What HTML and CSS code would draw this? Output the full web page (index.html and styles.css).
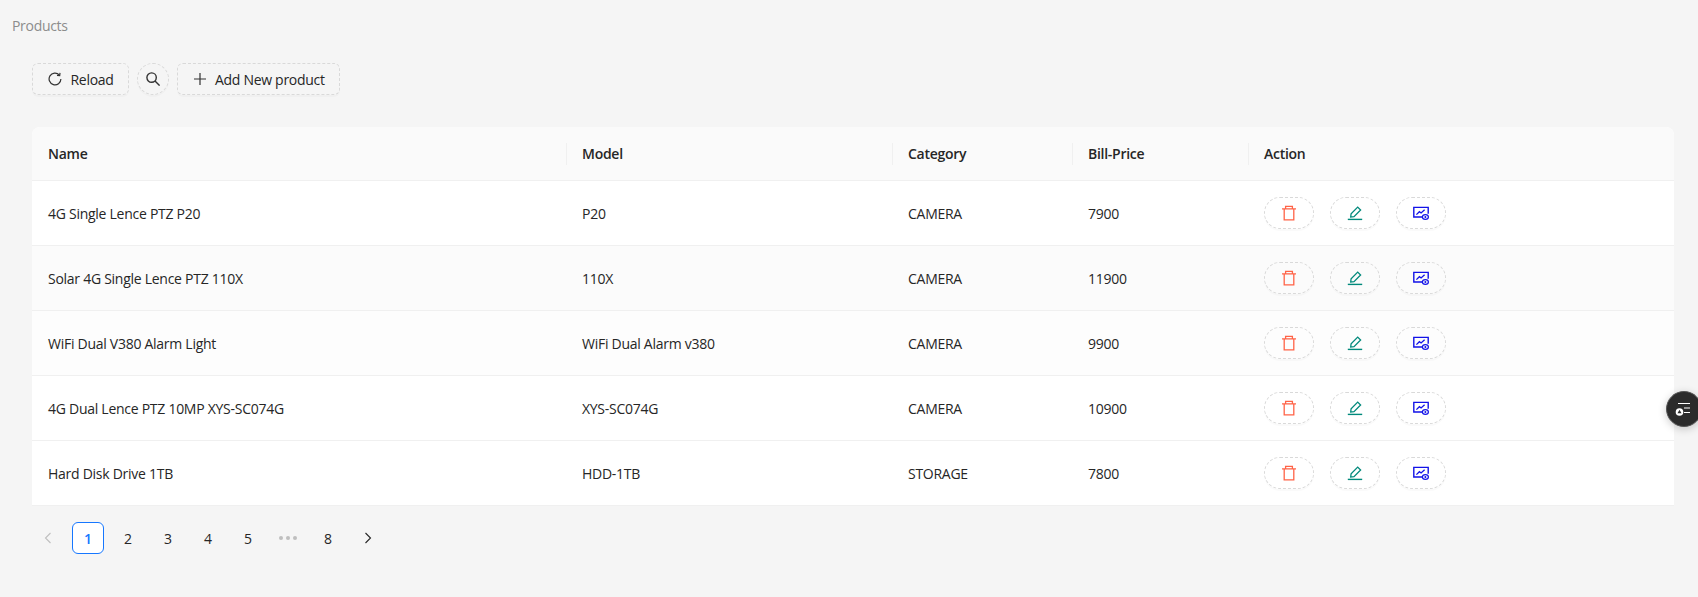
FILE: index.html
```html
<!DOCTYPE html>
<html lang="en">
<head>
<meta charset="utf-8">
<title>Products</title>
<link rel="stylesheet" href="styles.css">
</head>
<body>
<svg class="defs" aria-hidden="true">
  <symbol id="i-trash" viewBox="0 0 16 16"><path d="M1 3.8h14M4.6 3.6V1.3h6.8v2.3M3.2 3.8v11.1h9.6V3.8" fill="none" stroke="#ff6347" stroke-width="1.3"/></symbol>
  <symbol id="i-edit" viewBox="0 0 16 16"><path d="M3.7 12l.4-3.3 6.6-6.6 2.9 2.9L7 11.6z" fill="none" stroke="#00897b" stroke-width="1.3"/><path d="M.8 14.4h14.4" fill="none" stroke="#00897b" stroke-width="1.4"/></symbol>
  <symbol id="i-view" viewBox="0 0 16 16"><path d="M9.5 12H.8V2.4h14.4v6.4" fill="none" stroke="#1212e8" stroke-width="1.4"/><path d="M3.4 9.6l3-2.9 1.7 1.3 3.5-3.2" fill="none" stroke="#1212e8" stroke-width="1.3"/><ellipse cx="12.4" cy="12" rx="3" ry="2.3" fill="none" stroke="#1212e8" stroke-width="1.2"/><circle cx="12.4" cy="12" r="1" fill="#1212e8"/></symbol>
</svg>
<div class="crumb">Products</div>
<main class="content">
  <div class="toolbar">
    <button class="btn">
      <svg class="ico" viewBox="0 0 14 14" fill="none" stroke="#333" stroke-width="1.2"><path d="M11.3 2.9A5.9 5.9 0 1 0 12.9 7"/><path d="M12 .9l-.3 2.7-2.7-.3"/></svg>
      <span>Reload</span>
    </button>
    <button class="btn btn-round">
      <svg class="ico ico-search" viewBox="0 0 14 14" fill="none" stroke="#333" stroke-width="1.4"><circle cx="5.6" cy="5.6" r="4.7"/><path d="M9 9l4.6 4.6"/></svg>
    </button>
    <button class="btn">
      <svg class="ico" viewBox="0 0 14 14" fill="none" stroke="#333" stroke-width="1.2"><path d="M7 1v12M1 7h12"/></svg>
      <span>Add New product</span>
    </button>
  </div>

  <table class="tbl">
    <colgroup><col class="c1"><col class="c2"><col class="c3"><col class="c4"><col></colgroup>
    <thead>
      <tr><th>Name</th><th>Model</th><th>Category</th><th>Bill-Price</th><th>Action</th></tr>
    </thead>
    <tbody>
      <tr><td>4G Single Lence PTZ P20</td><td>P20</td><td>CAMERA</td><td>7900</td><td><div class="acts">
        <button class="act"><svg class="ai"><use href="#i-trash"/></svg></button>
        <button class="act"><svg class="ai"><use href="#i-edit"/></svg></button>
        <button class="act"><svg class="ai"><use href="#i-view"/></svg></button>
      </div></td></tr>
      <tr class="row-a"><td>Solar 4G Single Lence PTZ 110X</td><td>110X</td><td>CAMERA</td><td>11900</td><td><div class="acts">
        <button class="act"><svg class="ai"><use href="#i-trash"/></svg></button>
        <button class="act"><svg class="ai"><use href="#i-edit"/></svg></button>
        <button class="act"><svg class="ai"><use href="#i-view"/></svg></button>
      </div></td></tr>
      <tr class="row-b"><td>WiFi Dual V380 Alarm Light</td><td>WiFi Dual Alarm v380</td><td>CAMERA</td><td>9900</td><td><div class="acts">
        <button class="act"><svg class="ai"><use href="#i-trash"/></svg></button>
        <button class="act"><svg class="ai"><use href="#i-edit"/></svg></button>
        <button class="act"><svg class="ai"><use href="#i-view"/></svg></button>
      </div></td></tr>
      <tr><td>4G Dual Lence PTZ 10MP XYS-SC074G</td><td>XYS-SC074G</td><td>CAMERA</td><td>10900</td><td><div class="acts">
        <button class="act"><svg class="ai"><use href="#i-trash"/></svg></button>
        <button class="act"><svg class="ai"><use href="#i-edit"/></svg></button>
        <button class="act"><svg class="ai"><use href="#i-view"/></svg></button>
      </div></td></tr>
      <tr><td>Hard Disk Drive 1TB</td><td>HDD-1TB</td><td>STORAGE</td><td>7800</td><td><div class="acts">
        <button class="act"><svg class="ai"><use href="#i-trash"/></svg></button>
        <button class="act"><svg class="ai"><use href="#i-edit"/></svg></button>
        <button class="act"><svg class="ai"><use href="#i-view"/></svg></button>
      </div></td></tr>
    </tbody>
  </table>

  <nav class="pager">
    <span class="pg pg-off"><svg class="chev" viewBox="0 0 10 12" fill="none" stroke="currentColor" stroke-width="1.1"><path d="M7.5 1L2.5 6l5 5"/></svg></span>
    <span class="pg pg-on">1</span>
    <span class="pg">2</span>
    <span class="pg">3</span>
    <span class="pg">4</span>
    <span class="pg">5</span>
    <span class="pg pg-dots"><i class="dot"></i><i class="dot"></i><i class="dot"></i></span>
    <span class="pg">8</span>
    <span class="pg"><svg class="chev" viewBox="0 0 10 12" fill="none" stroke="currentColor" stroke-width="1.1"><path d="M2.5 1l5 5-5 5"/></svg></span>
  </nav>
</main>

<button class="fab" aria-label="Settings">
  <svg viewBox="0 0 20 16" width="20" height="16" fill="none" stroke="#fff" stroke-width="1.2"><path d="M6 2.5h12M12 7h6M12 11.5h6"/><circle cx="7.5" cy="11" r="3.8" fill="#fff" stroke="none"/><path d="M7.5 8.8l2 3.4h-4z" fill="#2b2b2b" stroke="none"/></svg>
</button>
</body>
</html>
```
FILE: styles.css
```css
* { box-sizing: border-box; }
html, body { margin: 0; height: 100%; overflow: hidden; }
body {
  background: #f5f5f5;
  color: #262626;
  font-family: "Open Sans", "Noto Sans", "Liberation Sans", sans-serif;
  font-size: 14px;
  position: relative;
}
.defs { display: none; }
.crumb {
  padding: 16px 0 0 12px;
  line-height: 20px;
  color: #8c8c8c;
  letter-spacing: -0.3px;
}
.content { padding: 27px 24px 0 32px; }
.toolbar { display: flex; gap: 8px; height: 32px; }
.btn {
  display: inline-flex;
  align-items: center;
  gap: 8.5px;
  height: 32px;
  padding: 0 14px 0 15px;
  background: transparent;
  border: 1px dashed #d9d9d9;
  border-radius: 6px;
  color: #262626;
  font: inherit;
  letter-spacing: -0.3px;
  box-shadow: 0 2px 0 rgba(0, 0, 0, 0.02);
}
.btn-round { width: 32px; padding: 0; justify-content: center; border-radius: 50%; }
.ico { width: 14px; height: 14px; display: block; }
.ico-search { margin-top: -1px; }
.tbl {
  width: 1642px;
  margin-top: 32px;
  border-collapse: separate;
  border-spacing: 0;
  table-layout: fixed;
  background: #fff;
  border-radius: 8px 8px 0 0;
}
.c1 { width: 534px; }
.c2 { width: 326px; }
.c3 { width: 180px; }
.c4 { width: 176px; }
th, td {
  padding: 0 16px;
  text-align: left;
  border-bottom: 1px solid #f0f0f0;
  letter-spacing: -0.27px;
}
th {
  height: 54px;
  background: #fafafa;
  font-weight: 600;
  position: relative;
}
th:first-child { border-radius: 8px 0 0 0; }
th:last-child { border-radius: 0 8px 0 0; }
th + th::before {
  content: "";
  position: absolute;
  left: 0;
  top: 50%;
  width: 1px;
  height: 22px;
  margin-top: -11px;
  background: #f0f0f0;
}
td { height: 65px; }
.row-a td { background: #fbfbfb; }
.row-b td { background: #fdfdfd; }
.acts { display: flex; gap: 16px; }
.act {
  width: 50px;
  height: 32px;
  display: flex;
  align-items: center;
  justify-content: center;
  background: transparent;
  border: 1px dashed #d9d9d9;
  border-radius: 16px;
  padding: 0;
  box-shadow: 0 2px 0 rgba(0, 0, 0, 0.02);
}
.ai { width: 16px; height: 16px; display: block; }
.pager { display: flex; gap: 8px; margin-top: 16px; }
.pg {
  width: 32px;
  height: 32px;
  display: flex;
  align-items: center;
  justify-content: center;
  color: #262626;
}
.pg-off { color: #bfbfbf; }
.pg-on {
  border: 1px solid #1677ff;
  border-radius: 6px;
  background: #fff;
  color: #1677ff;
  font-weight: 600;
}
.pg-dots { gap: 3px; }
.dot { width: 4px; height: 4px; border-radius: 50%; background: #bfbfbf; display: block; }
.chev { width: 10px; height: 12px; display: block; }
.fab {
  position: absolute;
  left: 1666px;
  top: 391px;
  width: 36px;
  height: 36px;
  border: 1px solid #555;
  border-radius: 50%;
  background: #2b2b2b;
  display: flex;
  align-items: center;
  justify-content: flex-start;
  padding: 0 0 0 5px;
  box-shadow: 0 2px 8px rgba(0, 0, 0, 0.2);
}
```
